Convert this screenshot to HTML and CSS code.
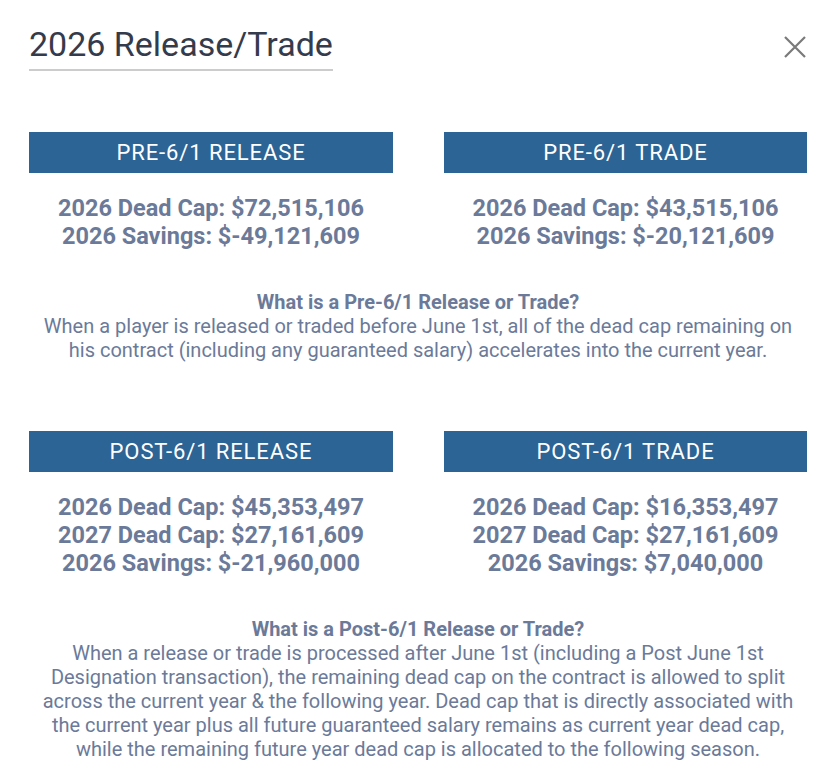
FILE: index.html
```html
<!DOCTYPE html>
<html>
<head>
<meta charset="utf-8">
<link rel="stylesheet" href="styles.css">
</head>
<body>
<div class="modal">
  <div class="modal-header">
    <h1 class="title">2026 Release/Trade</h1>
    <button class="close" aria-label="Close">
      <svg width="24" height="24" viewBox="0 0 24 24"><path d="M2 2 L22 22 M22 2 L2 22" stroke="#7a7a7a" stroke-width="2.2" fill="none"/></svg>
    </button>
  </div>

  <div class="section pre">
    <div class="cols">
      <div class="col">
        <div class="bar">PRE-6/1 RELEASE</div>
        <div class="vals">
          <div>2026 Dead Cap: $72,515,106</div>
          <div>2026 Savings: $-49,121,609</div>
        </div>
      </div>
      <div class="col">
        <div class="bar">PRE-6/1 TRADE</div>
        <div class="vals">
          <div>2026 Dead Cap: $43,515,106</div>
          <div>2026 Savings: $-20,121,609</div>
        </div>
      </div>
    </div>
    <div class="explain">
      <div class="q">What is a Pre-6/1 Release or Trade?</div>
      <p>When a player is released or traded before June 1st, all of the dead cap remaining on his contract (including any guaranteed salary) accelerates into the current year.</p>
    </div>
  </div>

  <div class="section post">
    <div class="cols">
      <div class="col">
        <div class="bar">POST-6/1 RELEASE</div>
        <div class="vals">
          <div>2026 Dead Cap: $45,353,497</div>
          <div>2027 Dead Cap: $27,161,609</div>
          <div>2026 Savings: $-21,960,000</div>
        </div>
      </div>
      <div class="col">
        <div class="bar">POST-6/1 TRADE</div>
        <div class="vals">
          <div>2026 Dead Cap: $16,353,497</div>
          <div>2027 Dead Cap: $27,161,609</div>
          <div>2026 Savings: $7,040,000</div>
        </div>
      </div>
    </div>
    <div class="explain">
      <div class="q">What is a Post-6/1 Release or Trade?</div>
      <p>When a release or trade is processed after June 1st (including a Post June 1st Designation transaction), the remaining dead cap on the contract is allowed to split across the current year &amp; the following year. Dead cap that is directly associated with the current year plus all future guaranteed salary remains as current year dead cap, while the remaining future year dead cap is allocated to the following season.</p>
    </div>
  </div>
</div>
</body>
</html>
```

FILE: styles.css
```css
* { box-sizing: border-box; }
html, body {
  margin: 0;
  padding: 0;
  background: #ffffff;
}
body {
  font-family: Roboto, "Liberation Sans", Arial, sans-serif;
  width: 834px;
  height: 780px;
  overflow: hidden;
}
.modal {
  padding: 0 27px 0 29px;
}
.modal-header {
  display: flex;
  justify-content: space-between;
  align-items: flex-start;
  padding-top: 24px;
}
.title {
  margin: 0;
  font-size: 34px;
  font-weight: 400;
  color: #343b4c;
  line-height: 40px;
  padding-bottom: 5px;
  border-bottom: 2px solid #cccccc;
}
.close {
  background: none;
  border: 0;
  padding: 0;
  margin-top: 11px;
  width: 24px;
  height: 24px;
  cursor: pointer;
}
.close svg { display: block; }
.section.pre { margin-top: 61px; }
.section.post { margin-top: 69px; }
.cols {
  display: grid;
  grid-template-columns: 364px 363px;
  column-gap: 51px;
}
.bar {
  background: #2b6495;
  color: #ffffff;
  font-size: 22px;
  letter-spacing: 0.9px;
  height: 41px;
  line-height: 41px;
  text-align: center;
}
.vals {
  margin-top: 21px;
  text-align: center;
  font-weight: 700;
  font-size: 23.5px;
  line-height: 28px;
  color: #6b7a99;
}
.explain {
  text-align: center;
  color: #6b7a99;
  margin-top: 40px;
}
.q {
  font-weight: 700;
  font-size: 20px;
  line-height: 24px;
}
.explain p {
  margin: 0;
  font-size: 20px;
  line-height: 24px;
}
```
